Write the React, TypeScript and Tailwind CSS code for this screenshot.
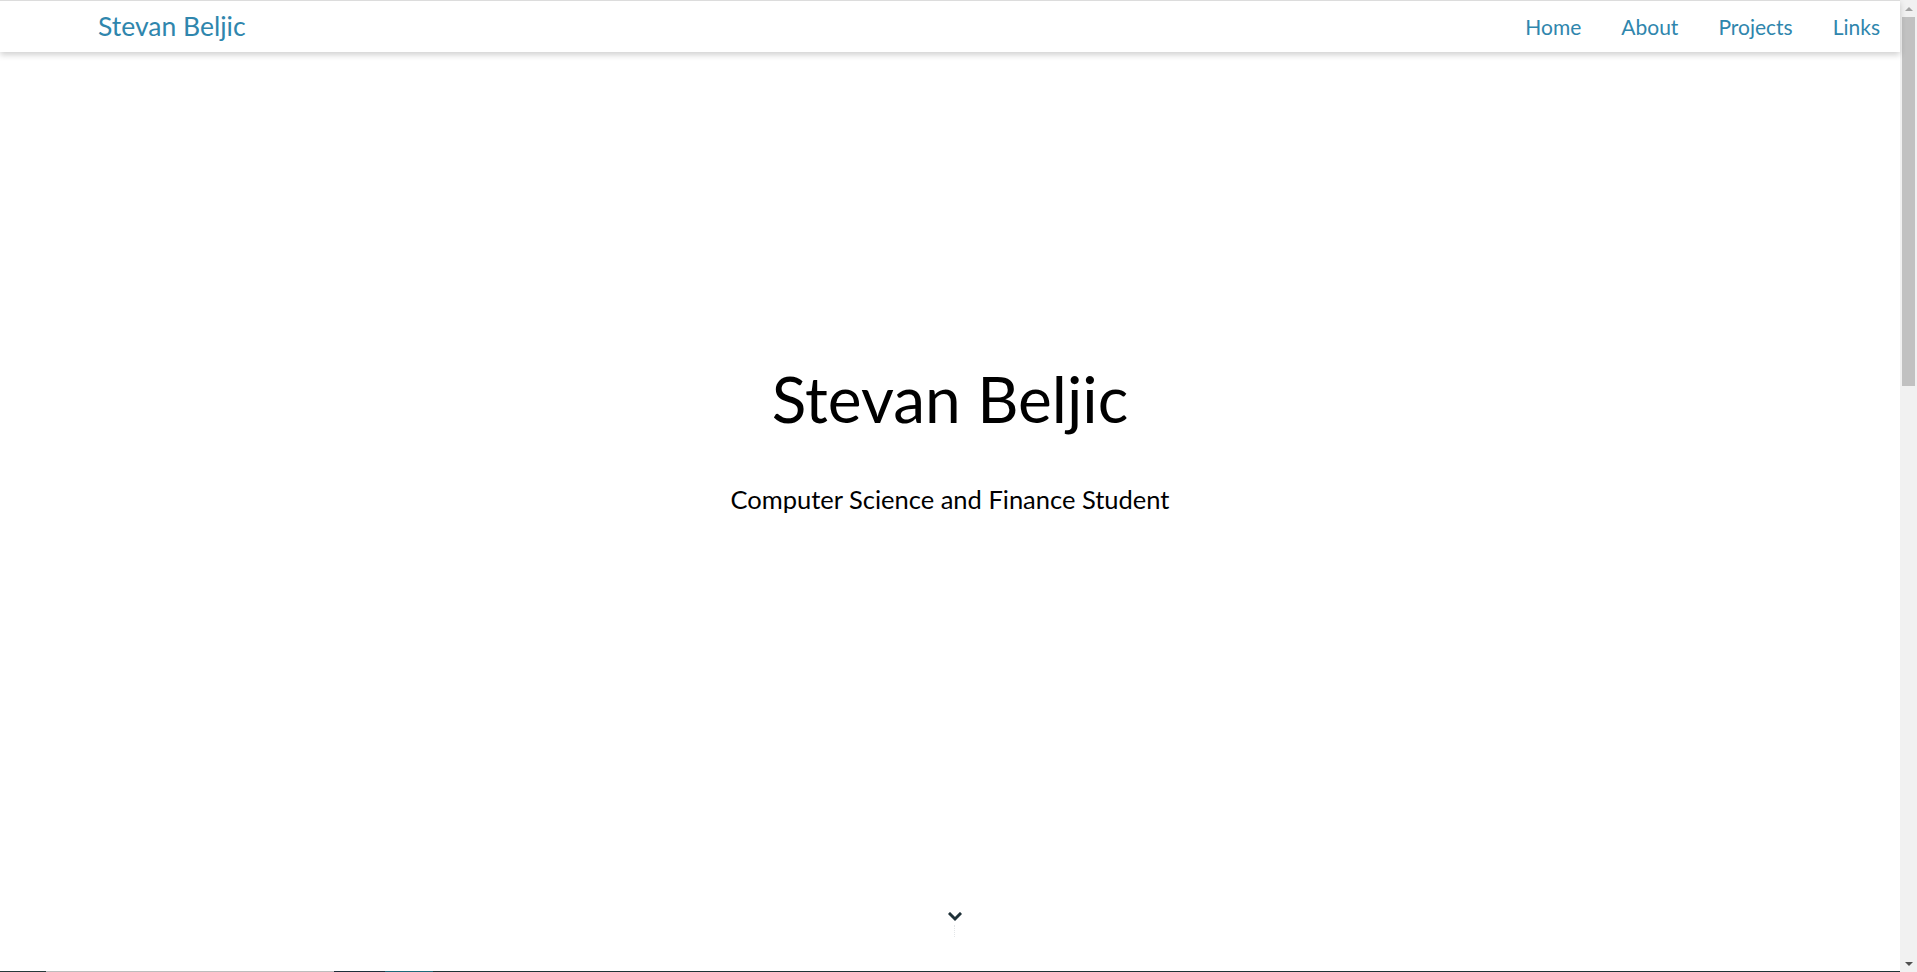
import React from "react";

const font = { fontFamily: "Lato, 'Open Sans', sans-serif" };

function Chevron() {
  return (
    <svg width="14" height="10" viewBox="0 0 14 10" className="block">
      <polyline points="2,2 7,7 12,2" fill="none" stroke="#1f3138" strokeWidth="3" strokeLinecap="square" />
    </svg>
  );
}

export default function App() {
  return (
    <div className="flex h-[972px] w-[1917px] overflow-hidden bg-white" style={font}>
      <div className="flex w-[1900px] flex-col">
        <nav className="relative z-10 flex h-[52px] items-center justify-between border-t border-[#dcdcdc] bg-white pl-[98px] pr-[20px] shadow-[0_3px_6px_rgba(0,0,0,0.18)]">
          <a className="text-[26.5px] leading-none text-[#2f86ad]">Stevan Beljic</a>
          <ul className="flex gap-[40px] text-[21px] leading-none text-[#2f86ad]">
            <li>Home</li>
            <li>About</li>
            <li>Projects</li>
            <li>Links</li>
          </ul>
        </nav>
        <main className="flex flex-1 flex-col items-center">
          <h1 className="mt-[315px] text-[64px] leading-none font-normal text-black">Stevan Beljic</h1>
          <p className="mt-[56px] text-[25.5px] leading-none text-black">Computer Science and Finance Student</p>
          <div className="flex-1" />
          <div className="mb-[34px] ml-[9px] flex flex-col items-center gap-[3px]">
            <Chevron />
            <div className="h-[12px] w-px border-l border-dotted border-[#e3e6e8]" />
          </div>
        </main>
        <div className="flex h-px">
          <div className="w-[46px] bg-[#263a3a]" />
          <div className="w-[288px] bg-[#bdbdbd]" />
          <div className="w-[51px] bg-[#1e2f3a]" />
          <div className="w-[48px] bg-[#1e6a7a]" />
          <div className="flex-1 bg-[#1e3436]" />
        </div>
      </div>
      <div className="flex w-[17px] flex-col bg-[#f1f1f1]">
        <div className="flex h-[17px] items-center justify-center">
          <div className="h-0 w-0 border-x-[4px] border-b-[4px] border-x-transparent border-b-[#a3a3a3]" />
        </div>
        <div className="mx-[2px] h-[369px] bg-[#c1c1c1]" />
        <div className="flex-1" />
        <div className="flex h-[17px] items-center justify-center">
          <div className="h-0 w-0 border-x-[4px] border-t-[4px] border-x-transparent border-t-[#505050]" />
        </div>
      </div>
    </div>
  );
}
